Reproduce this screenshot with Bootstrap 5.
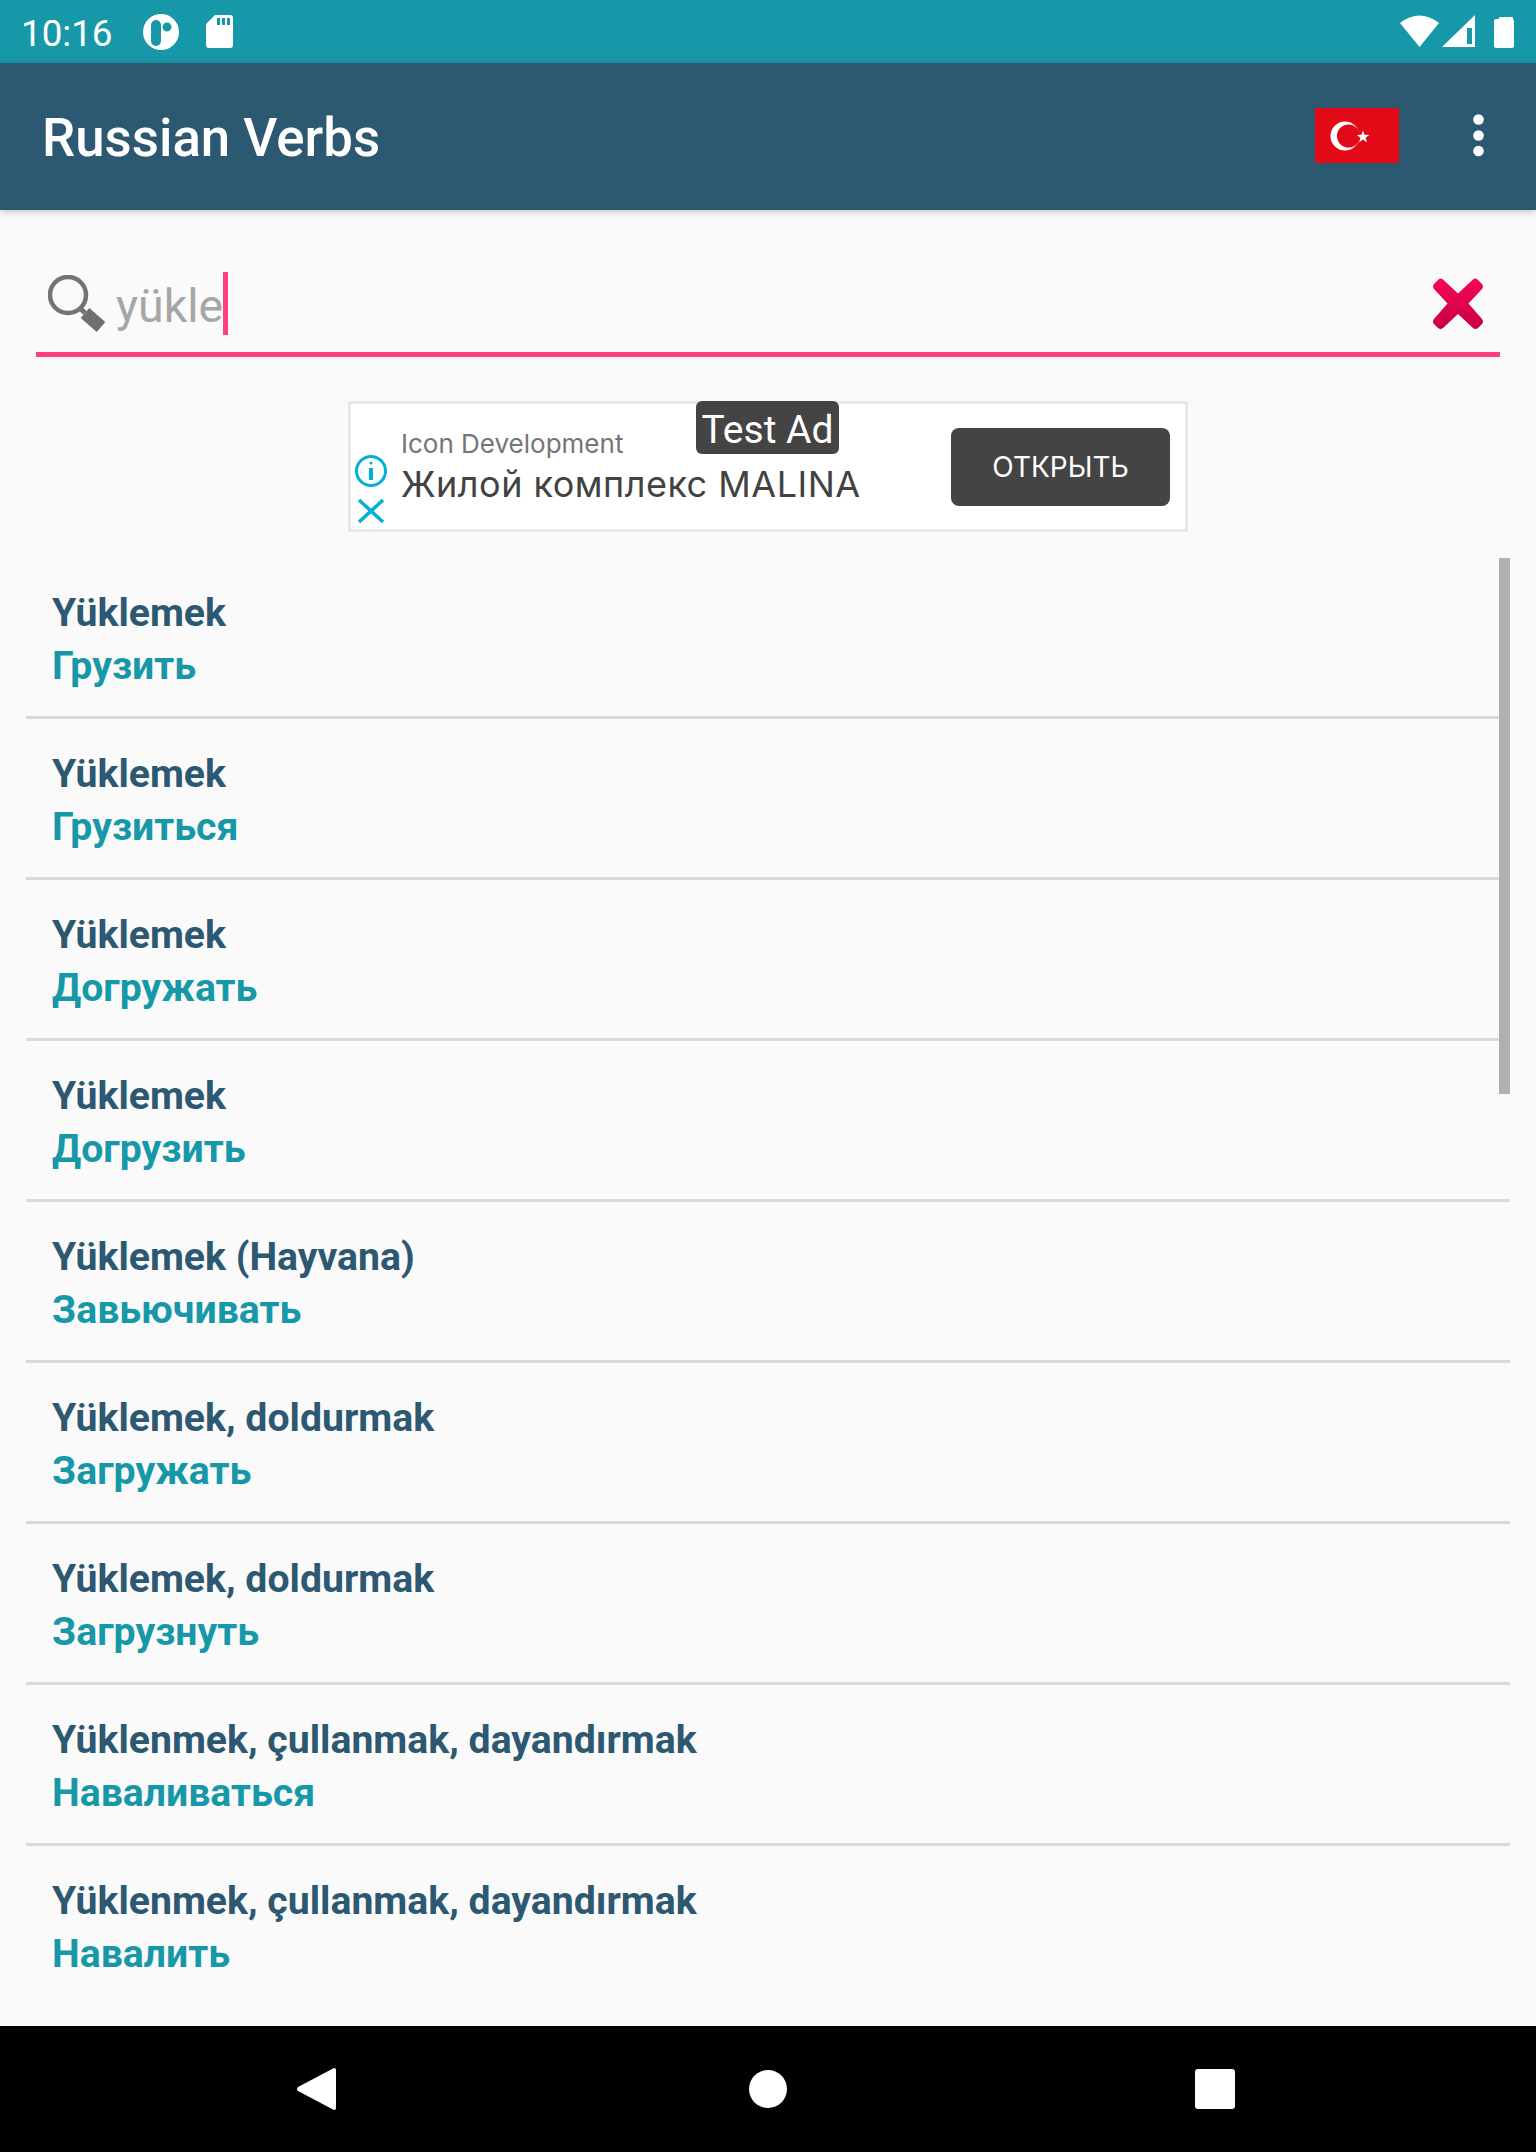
<!DOCTYPE html>
<html lang="ru">
<head>
<meta charset="utf-8">
<title>Russian Verbs</title>
<link href="https://cdn.jsdelivr.net/npm/bootstrap@5.3.0/dist/css/bootstrap.min.css" rel="stylesheet">
<style>
html,body{height:100%;}
body{background:#fafafa;font-family:Roboto,"Liberation Sans",sans-serif;overflow:hidden;}
.app-shell{height:2152px;}
.status-strip{height:63px;background:#1798a8;color:#fff;padding:0 21px 0 21px;}
.status-time{font-size:36.75px;line-height:63px;width:91px;margin-right:31px;padding-top:3px;}
.status-ic{display:block;fill:#fff;}
.sd-pic{margin-left:27px;}
.app-head{height:147px;background:#2c5871;color:#fff;padding:0 52px 0 42px;box-shadow:0 2px 7px rgba(0,0,0,.22);position:relative;z-index:2;}
.app-name{font-size:52.8px;font-weight:500;line-height:1;margin:3px 0 0;}
.flag-pic{display:block;margin-right:74px;margin-top:-2px;}
.menu-pic{display:block;margin-top:-3px;}
.search-area{height:147px;margin:0 36px;border-bottom:5px solid #ff3d7f;padding-top:60px;}
.search-caret{width:5px;height:63px;background:#ff3d7f;margin-top:2px;}
.search-value{font-size:46.5px;line-height:63px;color:#a6a6a6;margin-left:8px;margin-top:2px;padding-top:3px;height:63px;}
.search-glass{display:block;margin-left:12px;margin-top:5px;filter:blur(.6px);}
.search-clear{display:block;margin-right:16px;margin-top:8px;filter:blur(.5px);}
.ad-box{width:840px;height:131px;margin:44px auto 26px;background:#fff;border:3px solid #e8e8ea;position:relative;padding:0 15px 0 3px;}
.ad-tag{position:absolute;top:-3px;left:345px;width:143px;height:53px;background:#444;color:#fff;border-radius:6px;font-size:39px;line-height:58px;text-align:center;}
.ad-icons{width:47px;padding-top:50px;}
.ad-icons svg{display:block;}
.ad-sub{font-family:Inter,Roboto,sans-serif;font-size:26px;line-height:32px;color:#757575;margin-top:24px;}
.ad-main{font-family:Inter,Roboto,sans-serif;font-size:36px;line-height:44px;color:#424242;margin-top:2px;letter-spacing:.5px;}
.ad-open{width:219px;height:78px;background:#444;border:0;border-radius:8px;color:#fff;font-family:Inter,Roboto,sans-serif;font-size:28px;display:flex;align-items:center;justify-content:center;}
.ad-open:hover{background:#444;color:#fff;}
.verb-wrap{position:relative;}
.verb-list{background:transparent;margin:0 26px;border-radius:0;}
.verb-row{background:transparent;height:161px;padding:29px 0 0 26px;border:0;border-bottom:3px solid #dadada;font-weight:700;font-size:39.2px;line-height:53px;}
.verb-row:last-child{border-bottom:3px solid transparent;}
.verb-tr{color:#2c5871;}
.verb-ru{color:#1798a8;}
.scroll-thumb{position:absolute;top:0;left:1499px;width:11px;height:536px;background:#b0b0b0;}
.sys-nav{height:126px;background:#000;position:absolute;left:0;right:0;top:2026px;}
.nav-slot{position:absolute;top:0;display:block;}
</style>
</head>
<body>
<div class="app-shell d-flex flex-column">
  <div class="status-strip d-flex align-items-center">
    <div class="status-time">10:16</div>
    <svg class="status-ic" width="36" height="36" viewBox="0 0 36 36">
      <path fill-rule="evenodd" d="M18 0a18 18 0 1 0 0 36a18 18 0 0 0 0-36zM13 6a5 5 0 0 1 5 5v16a5 5 0 0 1-10 0v-16a5 5 0 0 1 5-5zM24 8.500a4.500 4.500 0 1 0 0 9a4.500 4.500 0 0 0 0-9z"/>
    </svg>
    <svg class="status-ic sd-pic me-auto" width="27" height="33" viewBox="0 0 27 33">
      <path fill-rule="evenodd" d="M9 0h15a3 3 0 0 1 3 3v27a3 3 0 0 1-3 3h-21a3 3 0 0 1-3-3v-21zM11 3v7h3v-7zM16 3v7h3v-7zM21 3v7h3v-7z"/>
    </svg>
    <svg class="status-ic" width="115" height="36" viewBox="0 0 115 36">
      <path d="M19.500 33L0 9Q19.500-6 39 9z"/>
      <path fill-rule="evenodd" d="M42 33L75 1v32zM67 14v16h5v-16z"/>
      <rect x="99" y="3" width="14" height="5" rx="1"/><rect x="94" y="5" width="20" height="29" rx="2"/>
    </svg>
  </div>
  <header class="app-head d-flex align-items-center">
    <h1 class="app-name me-auto">Russian Verbs</h1>
    <svg class="flag-pic" width="84" height="55" viewBox="0 0 84 55">
      <rect width="84" height="55" fill="#e30a17"/>
      <circle cx="30" cy="28" r="14.500" fill="#fff"/>
      <circle cx="33.500" cy="28" r="11.500" fill="#e30a17"/>
      <path d="M48 22.500l1.600 4.300 4.600.2-3.600 2.800 1.300 4.400-3.900-2.600-3.800 2.600 1.200-4.400-3.600-2.800 4.600-.2z" fill="#fff"/>
    </svg>
    <svg class="menu-pic" width="11" height="43" viewBox="0 0 11 43" fill="#fff">
      <circle cx="5.500" cy="5.500" r="5.300"/><circle cx="5.500" cy="21.500" r="5.300"/><circle cx="5.500" cy="37" r="5.300"/>
    </svg>
  </header>
  <div class="search-area d-flex align-items-start">
    <svg class="search-glass" width="60" height="60" viewBox="0 0 60 60">
      <circle cx="20" cy="20" r="18" fill="none" stroke="#737373" stroke-width="4.500"/>
      <path d="M32 33l5 5" stroke="#737373" stroke-width="5" fill="none"/>
      <path d="M37 38l16 14" stroke="#6f6f6f" stroke-width="13" fill="none"/>
    </svg>
    <div class="search-value">yükle</div>
    <div class="search-caret"></div>
    <svg class="search-clear ms-auto" width="52" height="52" viewBox="0 0 52 52">
      <defs><linearGradient id="redfade" x1="0" y1="0" x2="0" y2="1"><stop offset="0" stop-color="#f8055a"/><stop offset="1" stop-color="#c80040"/></linearGradient></defs>
      <path d="M11 1.500L26 15.500L41 1.500Q43.500-.5 46 2L50 6Q52 8.500 50 11L36.500 25.500L50 41Q52 43.500 50 46L46 50Q43.500 52 41 50L26 36L11 50Q8.500 52 6 50L2 46Q0 43.500 2 41L15.500 25.500L2 11Q0 8.500 2 6L6 2Q8.500-.5 11 1.500z" fill="url(#redfade)"/>
    </svg>
  </div>
  <div class="ad-box d-flex align-items-start">
    <div class="ad-tag">Test Ad</div>
    <div class="ad-icons flex-shrink-0">
      <svg width="36" height="70" viewBox="0 0 36 70" fill="none" stroke="#00b0d6" stroke-width="3">
        <circle cx="17" cy="17" r="14.500"/>
        <path d="M17 14v12" stroke-width="4"/><circle cx="17" cy="9" r="1.500" fill="#00b0d6" stroke="none"/>
        <path d="M5 46l24 22M29 46l-24 22" stroke-width="3.500"/>
      </svg>
    </div>
    <div class="flex-grow-1">
      <div class="ad-sub">Icon Development</div>
      <div class="ad-main">Жилой комплекс MALINA</div>
    </div>
    <button type="button" class="btn ad-open align-self-center">ОТКРЫТЬ</button>
  </div>
  <div class="verb-wrap flex-grow-1">
    <ul class="list-group verb-list">
      <li class="list-group-item verb-row"><div class="verb-tr">Yüklemek</div><div class="verb-ru">Грузить</div></li>
      <li class="list-group-item verb-row"><div class="verb-tr">Yüklemek</div><div class="verb-ru">Грузиться</div></li>
      <li class="list-group-item verb-row"><div class="verb-tr">Yüklemek</div><div class="verb-ru">Догружать</div></li>
      <li class="list-group-item verb-row"><div class="verb-tr">Yüklemek</div><div class="verb-ru">Догрузить</div></li>
      <li class="list-group-item verb-row"><div class="verb-tr">Yüklemek (Hayvana)</div><div class="verb-ru">Завьючивать</div></li>
      <li class="list-group-item verb-row"><div class="verb-tr">Yüklemek, doldurmak</div><div class="verb-ru">Загружать</div></li>
      <li class="list-group-item verb-row"><div class="verb-tr">Yüklemek, doldurmak</div><div class="verb-ru">Загрузнуть</div></li>
      <li class="list-group-item verb-row"><div class="verb-tr">Yüklenmek, çullanmak, dayandırmak</div><div class="verb-ru">Наваливаться</div></li>
      <li class="list-group-item verb-row"><div class="verb-tr">Yüklenmek, çullanmak, dayandırmak</div><div class="verb-ru">Навалить</div></li>
    </ul>
    <div class="scroll-thumb"></div>
  </div>
  <div class="sys-nav">
    <svg class="nav-slot" style="left:297px;top:42px" width="39" height="42" viewBox="0 0 39 42" fill="#fff"><path d="M37 0Q39 0 39 2V40Q39 42 37 42L1 23Q-1 21 1 19z"/></svg>
    <svg class="nav-slot" style="left:749px;top:44px" width="38" height="38" viewBox="0 0 38 38" fill="#fff"><circle cx="19" cy="19" r="19"/></svg>
    <svg class="nav-slot" style="left:1195px;top:43px" width="40" height="40" viewBox="0 0 40 40" fill="#fff"><rect width="40" height="40" rx="3"/></svg>
  </div>
</div>
<script src="https://cdn.jsdelivr.net/npm/bootstrap@5.3.0/dist/js/bootstrap.bundle.min.js"></script>
</body>
</html>
